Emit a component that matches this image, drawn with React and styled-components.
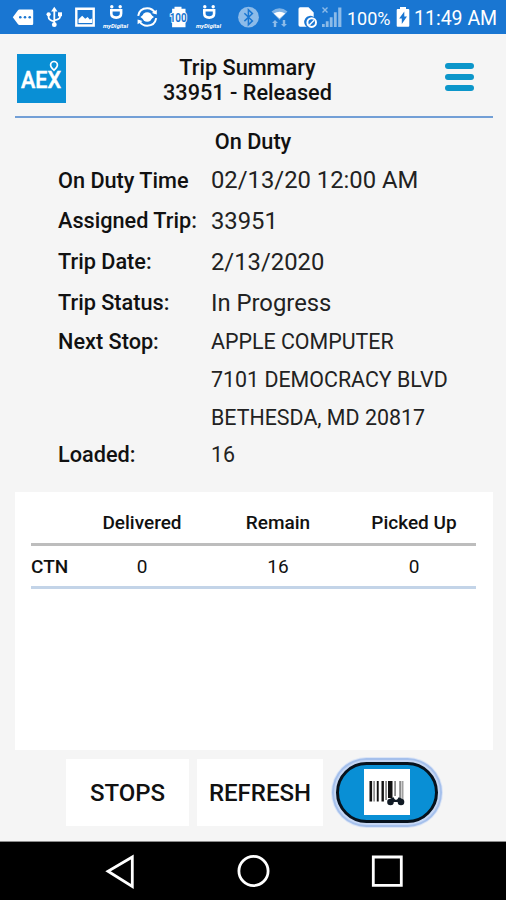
import React from "react";
import styled, { createGlobalStyle } from "styled-components";

const DETAILS = [
  { label: "On Duty Time", value: "02/13/20 12:00 AM", large: true, height: 40 },
  { label: "Assigned Trip:", value: "33951", large: true, height: 41 },
  { label: "Trip Date:", value: "2/13/2020", large: true, height: 41 },
  { label: "Trip Status:", value: "In Progress", large: true, height: 41 },
  { label: "Next Stop:", value: "APPLE COMPUTER", height: 37 },
  { label: "", value: "7101 DEMOCRACY BLVD", height: 38 },
  { label: "", value: "BETHESDA, MD 20817", height: 38 },
  { label: "Loaded:", value: "16", height: 37 },
];

const COLUMNS = ["Delivered", "Remain", "Picked Up"];

const ROWS = [{ label: "CTN", values: [0, 16, 0] }];

const PlugIcon = ({ x }) => (
  <g transform={`translate(${x} 0)`}>
    <circle cx="8.8" cy="6.8" r="1.7" />
    <circle cx="17.2" cy="6.8" r="1.7" />
    <path
      d="M8.3 10.3h9.8v3.2q0 4.1-4.9 4.1t-4.9-4.1z"
      fill="none"
      stroke="#fff"
      strokeWidth="2.6"
    />
    <text x="0" y="27.5" fontSize="6" fontWeight="700" fontStyle="italic" textLength="25">
      myDigital
    </text>
  </g>
);

const NotificationIcons = () => (
  <svg width="345" height="34" viewBox="0 0 345 34" fill="#fff">
    <path d="M19.5 9.5H32q1.2 0 1.2 1.2v13q0 1.2-1.2 1.2H19.5q-1 0-1.7-.9L12.8 17.2l5-6.8q.7-.9 1.7-.9z" />
    <g fill="#1976d2">
      <circle cx="20.3" cy="17.2" r="1.3" />
      <circle cx="25" cy="17.2" r="1.3" />
      <circle cx="29.7" cy="17.2" r="1.3" />
    </g>

    <g stroke="#fff" strokeWidth="1.8" fill="none">
      <path d="M54.3 10v14M48.6 15v2.2q0 2.8 5.7 4.3M60 14v3q0 2.2-5.7 3.4" />
    </g>
    <path d="M54.3 6.8l3.2 4.6h-6.4z" />
    <circle cx="48.6" cy="14.3" r="2.1" />
    <path d="M58 12.3h4v4h-4z" />
    <circle cx="54.3" cy="24.7" r="2.4" />

    <path d="M76.3 8.7h17.4v16.8H76.3z" fill="none" stroke="#fff" strokeWidth="2.4" />
    <path d="M78.5 23v-3.8l3.7-3.4 3 3 2.5-1.8 2 2.4 2.4-.8V23z" />

    <PlugIcon x={103} />

    <path
      d="M138.2 15.8q1.2-7.5 9-7.6 5.2 0 8.2 5M156.2 18.2q-1.3 7.5-9 7.6-5.2 0-8.2-5"
      fill="none"
      stroke="#fff"
      strokeWidth="2"
    />
    <path d="M156.8 9.7v4.8l-5-1.6zM137.6 24.3v-4.8l5 1.6z" />
    <circle cx="147.2" cy="17" r="4.8" />
    <path d="M140.4 17l5-3.7v7.4zM154 17l-5-3.7v7.4z" />

    <path d="M174.5 6.8h7v2h4v18.4h-13.4V8.8h2.4z" />
    <text
      x="169.7"
      y="21.7"
      fontSize="12"
      fontWeight="700"
      textLength="16.8"
      lengthAdjust="spacingAndGlyphs"
      stroke="#fff"
      strokeWidth="2"
      paintOrder="stroke"
      style={{ fill: "#1976d2" }}
    >
      100
    </text>

    <PlugIcon x={196} />

    <circle cx="248.5" cy="17.2" r="10.4" opacity=".5" />
    <path
      d="M244.4 13.3l8 7.6-4 3.8V9.8l4 3.8-8 7.5"
      fill="none"
      stroke="#1976d2"
      strokeWidth="1.5"
    />

    <path d="M271.5 11.6q8-6.5 16 0L279.5 20z" opacity=".45" />
    <path d="M273.8 13.4q5.7-3.2 11.4 0l-5.7 5z" />
    <path
      d="M275 20l3 3h-1.8v4h-2.4v-4H272zM284 27l-3-3h1.8v-4h2.4v4h1.8z"
      opacity=".5"
    />

    <path d="M300.2 7.2h8.3l5.2 5.2V17a6 6 0 0 0-7 9.8h-6.5q-1.7 0-1.7-1.7V9q0-1.8 1.7-1.8z" />
    <circle cx="311.7" cy="22.6" r="4.3" fill="none" stroke="#fff" strokeWidth="2" />
    <path d="M309.4 24.9l4.7-4.7" stroke="#fff" strokeWidth="1.4" />

    <g opacity=".5">
      <path d="M322 24h2.7v3H322zM325.8 21.3h2.8V27h-2.8zM329.8 17.2h2.8V27h-2.8zM333.9 12.3h2.8V27h-2.8zM338.2 7.6h3.2V27h-3.2z" />
      <path d="M322.5 7.5l5 5m0-5l-5 5" stroke="#fff" strokeWidth="1.4" />
    </g>
  </svg>
);

const BatteryIcon = () => (
  <svg width="14" height="22" viewBox="0 0 14 22" fill="#fff">
    <path d="M4 1h6v2h2.3q1 0 1 1v15.8q0 1-1 1H1.7q-1 0-1-1V4q0-1 1-1H4z" />
    <path d="M8.3 5.5v5H11L5.8 18v-5.4H3.2z" fill="#1976d2" />
  </svg>
);

const Logo = () => (
  <svg width="49" height="49" viewBox="0 0 49 49">
    <path d="M0 0h49v49H0z" fill="#098fd5" />
    <text
      x="4"
      y="33.5"
      fill="#fff"
      stroke="#fff"
      strokeWidth=".5"
      fontSize="23"
      fontWeight="500"
      textLength="40"
      lengthAdjust="spacingAndGlyphs"
    >
      AEX
    </text>
    <path
      d="M37 16.2q-3.4-3.3-3.4-5.3a3.4 3.4 0 0 1 6.8 0q0 2-3.4 5.3z"
      fill="none"
      stroke="#fff"
      strokeWidth="1.7"
    />
  </svg>
);

const BarcodeIcon = () => (
  <svg width="46" height="46" viewBox="0 0 46 46">
    <path d="M0 0h46v46H0z" fill="#fff" />
    <path d="M5.5 12h2.6v20.5H5.5zM12.8 12h1.9v20.5h-1.9zM17.5 12h2.4v20.5h-2.4zM24 12h4.5v17H24z" fill="#111" />
    <path d="M9.3 12h1.6v20.5H9.3zM21.2 12h1.8v19h-1.8zM30.2 12h1.8v15h-1.8zM35.2 12h2.2v17h-2.2zM38.2 12h1.2v19h-1.2z" fill="#8b8b8b" />
    <g fill="#101a24">
      <path d="M26.5 29.5l3-1.2 1.6 2.2h2l1.6-2.2 3 1.2v3.5H26.5z" />
      <circle cx="26.5" cy="33" r="3.3" />
      <circle cx="37" cy="33" r="3.3" />
    </g>
    <circle cx="31.9" cy="29" r="1.5" fill="#fff" />
    <path d="M30.2 34.3h3.4V37h-3.4z" fill="#fff" />
  </svg>
);

const App = () => (
  <>
    <GlobalStyle />
    <Screen>
      <StatusBar>
        <NotificationIcons />
        <StatusText $width={51}>100%</StatusText>
        <BatteryIcon />
        <StatusText $width={94} $size={19.5} $offset={4}>
          11:49 AM
        </StatusText>
      </StatusBar>
      <Header>
        <Logo />
        <Title>
          Trip Summary
          <br />
          33951 - Released
        </Title>
        <MenuButton aria-label="Menu">
          <MenuBar />
          <MenuBar />
          <MenuBar />
        </MenuButton>
      </Header>
      <DutyStatus>On Duty</DutyStatus>
      <Details>
        {DETAILS.map(({ label, value, large, height }) => (
          <DetailRow key={value} $height={height}>
            <Label>{label}</Label>
            <Value $large={large}>{value}</Value>
          </DetailRow>
        ))}
      </Details>
      <Card>
        <TableRow $head>
          <span />
          {COLUMNS.map((column) => (
            <HeadCell key={column}>{column}</HeadCell>
          ))}
        </TableRow>
        {ROWS.map(({ label, values }) => (
          <TableRow key={label}>
            <RowLabel>{label}</RowLabel>
            {values.map((value, index) => (
              <Cell key={COLUMNS[index]}>{value}</Cell>
            ))}
          </TableRow>
        ))}
      </Card>
      <Actions>
        <ActionButton $width={123}>STOPS</ActionButton>
        <ActionButton $width={126}>REFRESH</ActionButton>
        <ScanButton aria-label="Scan">
          <BarcodeIcon />
        </ScanButton>
      </Actions>
      <NavBar>
        <svg width="506" height="58" viewBox="0 0 506 58" fill="none" stroke="#fff" strokeWidth="2.8">
          <path d="M132.3 15v29.5L108 29.3z" />
          <circle cx="253.5" cy="29" r="14.6" />
          <path d="M373.3 15h28v28.4h-28z" />
        </svg>
      </NavBar>
    </Screen>
  </>
);

const GlobalStyle = createGlobalStyle`
  * {
    box-sizing: border-box;
  }

  body {
    margin: 0;
    background: #f5f5f5;
    font-family: Roboto, "Liberation Sans", sans-serif;
    color: #111;
  }

  svg {
    display: block;
    flex: none;
  }

  button {
    border: 0;
    padding: 0;
    font-family: inherit;
    color: inherit;
  }
`;

const Screen = styled.div`
  display: flex;
  flex-direction: column;
  width: 506px;
  height: 900px;
  overflow: hidden;
`;

const StatusBar = styled.div`
  display: flex;
  align-items: center;
  height: 34px;
  background: #1976d2;
  color: #fff;
`;

const StatusText = styled.span`
  width: ${({ $width }) => $width}px;
  padding: 3px 0 0 ${({ $offset = 2 }) => $offset}px;
  font-size: ${({ $size = 18 }) => $size}px;
  line-height: 24px;
  white-space: nowrap;
`;

const Header = styled.header`
  display: flex;
  justify-content: space-between;
  align-items: flex-start;
  height: 84px;
  margin: 0 13px 0 15px;
  padding: 20px 19px 0 2px;
  border-bottom: 2px solid #729fd6;
`;

const Title = styled.h1`
  margin: 0;
  padding: 1px 16px 0 0;
  font-size: 21.7px;
  font-weight: 500;
  line-height: 25px;
  text-align: center;
`;

const MenuButton = styled.button`
  display: flex;
  flex-direction: column;
  gap: 5px;
  padding-top: 9px;
  background: none;
`;

const MenuBar = styled.span`
  width: 29px;
  height: 6px;
  border-radius: 3px;
  background: #0c96ca;
`;

const DutyStatus = styled.div`
  height: 42px;
  padding-top: 11px;
  font-size: 21.7px;
  font-weight: 500;
  line-height: 26px;
  text-align: center;
`;

const Details = styled.div`
  height: 332px;
  padding-left: 58px;
`;

const DetailRow = styled.div`
  display: flex;
  align-items: center;
  height: ${({ $height }) => $height}px;
  white-space: nowrap;
`;

const Label = styled.span`
  width: 153px;
  font-size: 21.7px;
  font-weight: 500;
`;

const Value = styled.span`
  font-size: ${({ $large }) => ($large ? 23.8 : 21.4)}px;
  color: #222;
`;

const Card = styled.section`
  height: 258px;
  margin: 0 13px 0 15px;
  padding: 9px 17px 0 16px;
  background: #fff;
`;

const TableRow = styled.div`
  display: grid;
  grid-template-columns: 43px 136px 136px 136px;
  align-items: center;
  height: ${({ $head }) => ($head ? 45 : 43)}px;
  padding-top: 1px;
  border-bottom: 3px solid ${({ $head }) => ($head ? "#bdbdbd" : "#c3d4e8")};
  text-align: center;
`;

const HeadCell = styled.span`
  font-size: 19px;
  font-weight: 500;
`;

const RowLabel = styled(HeadCell)`
  text-align: left;
`;

const Cell = styled.span`
  font-size: 19px;
`;

const Actions = styled.div`
  display: flex;
  align-items: center;
  gap: 8px;
  height: 92px;
  padding: 0 0 7px 66px;
  border-bottom: 1px solid #8c8c8c;
`;

const ActionButton = styled.button`
  width: ${({ $width }) => $width}px;
  height: 67px;
  padding-top: 2px;
  background: #fff;
  font-size: 24px;
  font-weight: 500;
`;

const ScanButton = styled.button`
  display: flex;
  align-items: center;
  justify-content: center;
  width: 102px;
  height: 61px;
  margin-left: 5px;
  border: 3px solid #07121d;
  border-radius: 31px;
  background: #098fd5;
  box-shadow: 0 0 0 2px #c6d7f4, 0 0 0 4px #a5c0ec, 0 0 0 5px #dbe5f6;
`;

const NavBar = styled.nav`
  height: 58px;
  background: #000;
`;

export default App;
